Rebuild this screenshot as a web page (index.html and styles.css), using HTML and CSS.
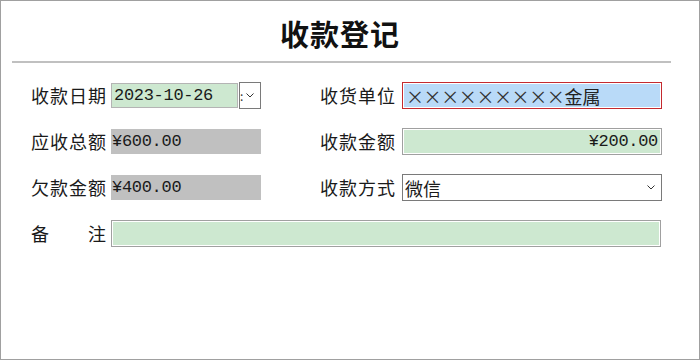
FILE: index.html
```html
<!DOCTYPE html>
<html lang="zh-CN">
<head>
    <meta charset="UTF-8">
    <title>收款登记</title>
    <link rel="stylesheet" href="styles.css">
</head>
<body>
    <div class="window">
        <header class="header">
            <h1>收款登记</h1>
        </header>
        <div class="divider"></div>

        <form class="form">
            <span class="label">收款日期</span>
            <div class="date-field">
                <span class="field green mono">2023-10-26</span>
                <span class="drop-btn">
                    <span class="clip">:</span>
                    <svg class="chevron" width="8" height="5" viewBox="0 0 8 5"><polyline points="0.5,0.5 4,4 7.5,0.5" fill="none" stroke="#333" stroke-width="1"/></svg>
                </span>
            </div>
            <span class="label col-r">收货单位</span>
            <span class="field selected"><span class="mask">×××××××××</span>金属</span>

            <span class="label">应收总额</span>
            <span class="field gray mono">¥600.00</span>
            <span class="label col-r">收款金额</span>
            <span class="field green boxed mono amount">¥200.00</span>

            <span class="label">欠款金额</span>
            <span class="field gray mono">¥400.00</span>
            <span class="label col-r">收款方式</span>
            <span class="field select">
                微信
                <svg class="chevron" width="8" height="5" viewBox="0 0 8 5"><polyline points="0.5,0.5 4,4 7.5,0.5" fill="none" stroke="#333" stroke-width="1"/></svg>
            </span>

            <span class="label spread"><span>备</span><span>注</span></span>
            <span class="field green boxed remark"></span>
        </form>
    </div>
</body>
</html>
```

FILE: styles.css
```css
* {
    margin: 0;
    padding: 0;
    box-sizing: border-box;
}

body {
    font-family: "Noto Sans CJK SC", sans-serif;
    background: #fff;
    color: #1a1a1a;
}

.window {
    width: 700px;
    height: 360px;
    border: 1px solid #a0a0a0;
    background: #fff;
}

.header {
    height: 60px;
    padding: 4px 20px 0 0;
    display: flex;
    align-items: center;
    justify-content: center;
}

.header h1 {
    font-size: 29px;
    font-weight: 700;
    letter-spacing: 1px;
    color: #111;
}

.divider {
    margin-left: 11px;
    width: 659px;
    height: 2px;
    background: #c0c0c0;
}

.form {
    display: grid;
    grid-template-columns: 80px 150px 59px 82px 260px;
    grid-template-rows: 27px 27px 27px 27px;
    row-gap: 19px;
    padding: 19px 0 0 30px;
    align-items: center;
}

.label {
    grid-column: 1;
    font-size: 18px;
    letter-spacing: 1px;
    line-height: 27px;
    white-space: nowrap;
}

.label.col-r {
    grid-column: 4;
}

.label.spread {
    display: flex;
    justify-content: space-between;
    width: 75px;
    letter-spacing: 0;
}

.field {
    display: flex;
    align-items: center;
    height: 27px;
    font-size: 18px;
    white-space: nowrap;
    overflow: hidden;
}

.mono {
    font-family: "Liberation Mono", monospace;
    font-size: 17px;
    letter-spacing: -0.3px;
}

.gray {
    grid-column: 2;
    height: 25px;
    background: #c0c0c0;
    padding-left: 1px;
}

.green {
    background: #cde8d0;
}

.boxed {
    border: 1px solid #a0a0a0;
    box-shadow: inset 0 0 0 1px #fff;
}

.date-field {
    grid-column: 2;
    display: flex;
    align-items: center;
    gap: 1px;
}

.date-field .field {
    width: 127px;
    height: 25px;
    border: 1px solid #b4b4b4;
    padding-left: 2px;
}

.drop-btn {
    width: 22px;
    height: 27px;
    border: 1px solid #7a7a7a;
    background: #fff;
    display: flex;
    align-items: center;
    gap: 3px;
}

.clip {
    font-size: 12px;
    line-height: 1;
    color: #333;
}

.selected {
    grid-column: 5;
    background: #b9daf8;
    border: 1px solid #c42a2f;
    box-shadow: inset 0 0 0 1px #fff;
    padding-left: 3px;
    color: #222;
}

.mask {
    letter-spacing: -0.4px;
    color: #333;
}

.amount {
    grid-column: 5;
    justify-content: flex-end;
    padding-right: 3px;
}

.select {
    grid-column: 5;
    border: 1px solid #7a7a7a;
    background: #fff;
    padding: 0 6px 0 2px;
    justify-content: space-between;
}

.remark {
    grid-column: 2 / 6;
    width: 550px;
}
```
